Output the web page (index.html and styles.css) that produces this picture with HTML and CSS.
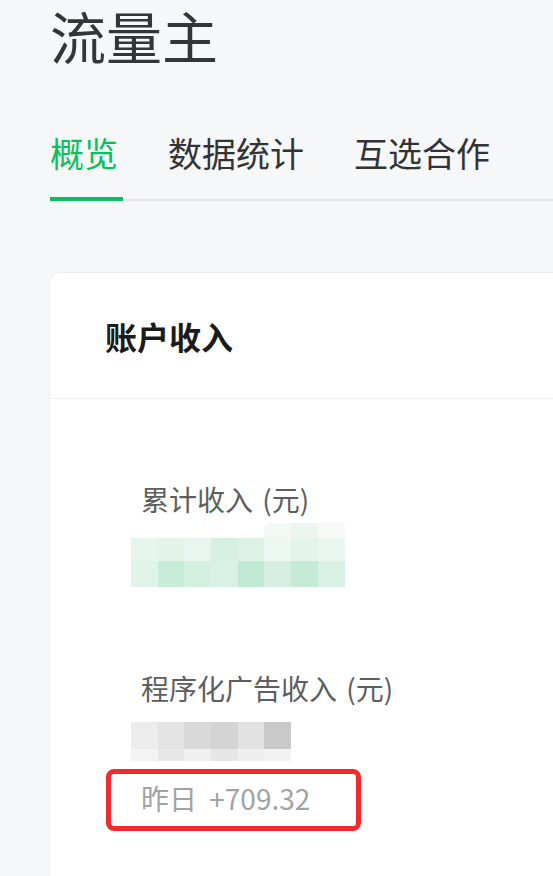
FILE: index.html
```html
<!DOCTYPE html>
<html lang="zh-CN">
<head>
<meta charset="utf-8">
<title>流量主</title>
<link rel="stylesheet" href="styles.css">
</head>
<body>
<div class="page">
  <h1 class="title">流量主</h1>
  <nav class="tabs">
    <a class="tab active">概览</a>
    <a class="tab">数据统计</a>
    <a class="tab">互选合作</a>
  </nav>
  <section class="card">
    <header class="card-head">账户收入</header>
    <div class="card-body">
      <div class="label">累计收入 (元)</div>
      <div class="blur blur-green">
        <i></i><i></i><i></i><i></i><i></i><i class="g1"></i><i class="g2"></i><i class="g3"></i>
        <i class="g4"></i><i class="g5"></i><i class="g6"></i><i class="g7"></i><i class="g8"></i><i class="g9"></i><i class="g10"></i><i class="g11"></i>
        <i class="g12"></i><i class="g13"></i><i class="g14"></i><i class="g15"></i><i class="g16"></i><i class="g17"></i><i class="g18"></i><i class="g19"></i>
      </div>
      <div class="label label-second">程序化广告收入 (元)</div>
      <div class="blur blur-gray">
        <i class="k1"></i><i class="k2"></i><i class="k3"></i><i class="k4"></i><i class="k5"></i><i class="k6"></i>
        <i class="k7"></i><i class="k8"></i><i class="k9"></i><i class="k10"></i><i class="k11"></i><i class="k12"></i>
      </div>
      <div class="yesterday">昨日 +709.32</div>
    </div>
  </section>
</div>
</body>
</html>
```

FILE: styles.css
```css
html, body {
  margin: 0;
  padding: 0;
}
body {
  background: #f6f7f9;
  font-family: "Noto Sans CJK SC", "Noto Sans", sans-serif;
  overflow: hidden;
  width: 553px;
  height: 876px;
}
.page {
  padding-left: 50px;
  width: 800px;
}
.title {
  margin: 0;
  padding-top: 0;
  font-size: 56px;
  line-height: 70px;
  font-weight: 400;
  color: #353535;
}
.tabs {
  margin-top: 66px;
  display: flex;
  align-items: flex-end;
  gap: 45px;
  border-bottom: 2px solid #e6e7e9;
}
.tab {
  font-size: 34px;
  line-height: 34px;
  color: #333;
  padding-right: 5px;
  padding-bottom: 27px;
  border-bottom: 4px solid transparent;
  margin-bottom: -2px;
}
.tab.active {
  color: #07c160;
  border-bottom-color: #07c160;
}
.card {
  margin-top: 71px;
  background: #fff;
  border: 1px solid #ececee;
  border-radius: 12px;
  width: 720px;
  height: 700px;
  margin-left: -1px;
}
.card-head {
  height: 125px;
  display: flex;
  align-items: center;
  padding-left: 55px;
  font-size: 32px;
  line-height: 32px;
  font-weight: 700;
  color: #1b1b1b;
  border-bottom: 1px solid #efefef;
}
.card-body {
  padding: 86px 0 0 91px;
}
.label {
  font-size: 28px;
  line-height: 28px;
  color: #5e5e5e;
  word-spacing: 3px;
}
.label-second {
  margin-top: 87px;
}
.blur {
  display: grid;
  margin-left: -10px;
}
.blur i {
  display: block;
}
.blur-green {
  margin-top: 10px;
  grid-template-columns: repeat(8, 26.7px);
  grid-template-rows: 15px 23px 26px;
}
.g1 { background: #f3f8f5; border-radius: 8px 0 0 0; }
.g2 { background: #eef5f1; }
.g3 { background: #f7faf8; }
.g4 { background: #e6f5ed; }
.g5 { background: #e2f3e9; }
.g6 { background: #e9f6ef; }
.g7 { background: #d6f0e2; }
.g8 { background: #ddf2e7; }
.g9 { background: #eef8f2; }
.g10 { background: #e4f4eb; }
.g11 { background: #e9f7f0; }
.g12 { background: #e1f3e9; }
.g13 { background: #c7ecd8; }
.g14 { background: #d3efe0; }
.g15 { background: #d9f1e4; }
.g16 { background: #bfe9d3; }
.g17 { background: #d6efe2; }
.g18 { background: #c4ebd5; }
.g19 { background: #d8f1e4; }
.blur-gray {
  margin-top: 20px;
  grid-template-columns: repeat(6, 26.7px);
  grid-template-rows: 27px 12px;
}
.k1 { background: #ececec; }
.k2 { background: #e3e3e3; }
.k3 { background: #d9d9d9; }
.k4 { background: #d4d4d4; }
.k5 { background: #e2e2e2; }
.k6 { background: #c9c9c9; }
.k7 { background: #f3f3f3; }
.k8 { background: #e7e7e7; }
.k9 { background: #f0f0f0; }
.k10 { background: #e6e6e6; }
.k11 { background: #eeeeee; }
.k12 { background: #f2f2f2; }
.yesterday {
  margin-top: 8px;
  margin-left: -35px;
  box-sizing: border-box;
  width: 255px;
  padding: 10px 0 14px 30px;
  border: 5px solid #f32a2a;
  border-radius: 8px;
  font-size: 28px;
  line-height: 28px;
  color: #a3a3a3;
  word-spacing: 6px;
}
```
